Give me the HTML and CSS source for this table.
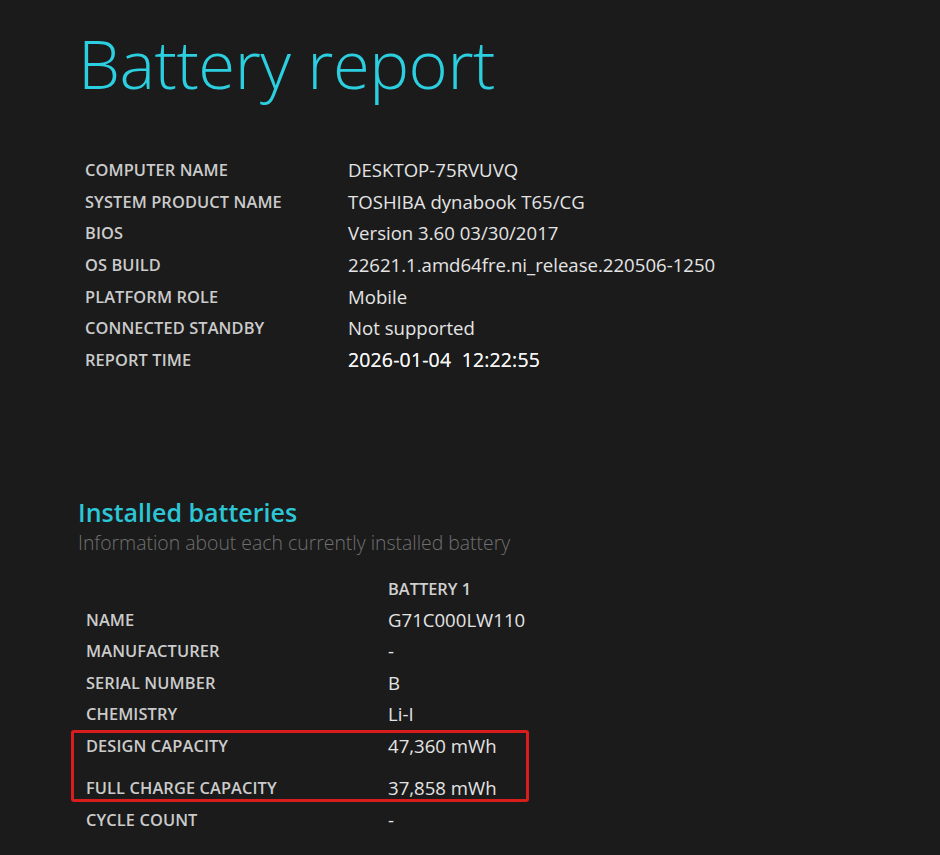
FILE: index.html
```html
<!DOCTYPE html>
<html>
<head>
<meta charset="utf-8">
<link rel="stylesheet" href="styles.css">
</head>
<body>
<div class="page">
  <h1 class="title">Battery report</h1>
  <div class="info">
    <div class="lbl">COMPUTER NAME</div><div class="val">DESKTOP-75RVUVQ</div>
    <div class="lbl">SYSTEM PRODUCT NAME</div><div class="val">TOSHIBA dynabook T65/CG</div>
    <div class="lbl">BIOS</div><div class="val">Version 3.60 03/30/2017</div>
    <div class="lbl">OS BUILD</div><div class="val">22621.1.amd64fre.ni_release.220506-1250</div>
    <div class="lbl">PLATFORM ROLE</div><div class="val">Mobile</div>
    <div class="lbl">CONNECTED STANDBY</div><div class="val">Not supported</div>
    <div class="lbl">REPORT TIME</div><div class="val time">2026-01-04&nbsp; 12:22:55</div>
  </div>

  <h2 class="section">Installed batteries</h2>
  <div class="subtitle">Information about each currently installed battery</div>

  <div class="batt">
    <div class="lbl"></div><div class="head">BATTERY 1</div>
    <div class="lbl">NAME</div><div class="val">G71C000LW110</div>
    <div class="lbl">MANUFACTURER</div><div class="val">-</div>
    <div class="lbl">SERIAL NUMBER</div><div class="val">B</div>
    <div class="lbl">CHEMISTRY</div><div class="val">Li-I</div>
    <div class="lbl">DESIGN CAPACITY</div><div class="val">47,360 mWh</div>
    <div class="lbl low">FULL CHARGE CAPACITY</div><div class="val low">37,858 mWh</div>
    <div class="lbl">CYCLE COUNT</div><div class="val">-</div>
    <div class="highlight"></div>
  </div>
</div>
</body>
</html>
```

FILE: styles.css
```css
html, body {
  margin: 0;
  padding: 0;
  background: #1b1b1b;
}
body {
  font-family: "Open Sans", "Noto Sans", sans-serif;
  color: #e2e2e2;
  width: 940px;
  height: 855px;
  overflow: hidden;
}
.page {
  padding: 20px 0 0 78px;
}
.title {
  margin: 0;
  font-weight: 300;
  font-size: 67px;
  line-height: 86px;
  color: #2ccfe0;
  letter-spacing: -0.5px;
}
.info {
  display: grid;
  grid-template-columns: 263px auto;
  grid-auto-rows: 31.6px;
  align-items: center;
  margin: 48px 0 0 7px;
}
.lbl {
  font-weight: 600;
  font-size: 16.4px;
  color: #cbcbcb;
  letter-spacing: 0.1px;
}
.val {
  font-size: 18.6px;
  font-weight: 400;
  color: #e4e4e4;
}
.val.time {
  font-size: 19.4px;
  color: #f4f4f4;
  text-shadow: 0 0 0.4px #f4f4f4;
  letter-spacing: 0.2px;
}
.section {
  margin: 121px 0 0 0;
  font-size: 25px;
  font-weight: 600;
  color: #2cc6d6;
  line-height: 32px;
}
.subtitle {
  font-size: 19.4px;
  font-weight: 300;
  color: #707070;
  line-height: 30px;
}
.batt {
  position: relative;
  display: grid;
  grid-template-columns: 302px auto;
  grid-template-rows: 31.5px 30.5px 31.5px 31.5px 31.5px 32px 42px 31px;
  align-items: center;
  margin: 15px 0 0 8px;
}
.batt .low {
  align-self: end;
  line-height: 31.5px;
}
.head {
  font-weight: 600;
  font-size: 16.4px;
  color: #d0d0d0;
}
.highlight {
  position: absolute;
  left: -15px;
  top: 157px;
  width: 452px;
  height: 66px;
  border: 3.5px solid #d91c1c;
  border-radius: 3px;
}
```
